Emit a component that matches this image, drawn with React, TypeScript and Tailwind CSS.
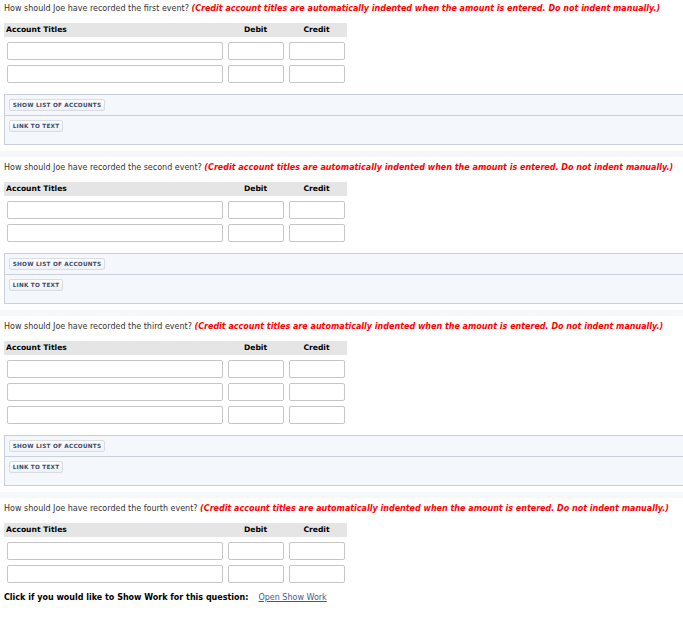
const ORDINALS = ['first', 'second', 'third', 'fourth'];
const ROWS = [2, 2, 3, 2];

function Question({ ordinal }: { ordinal: string }) {
  return (
    <p className="h-[13px] pl-[4px] text-[8px] leading-[13px] text-[#333] whitespace-nowrap">
      How should Joe have recorded the {ordinal} event?{' '}
      <span className="font-bold italic text-[#ff0000]">
        (Credit account titles are automatically indented when the amount is entered. Do not indent manually.)
      </span>
    </p>
  );
}

function EntryTable({ rows }: { rows: number }) {
  return (
    <div className="ml-[4px] mt-[8px] w-[343px]">
      <div className="flex h-[14px] items-center bg-[#e5e5e5] text-[7.6px] font-bold text-black">
        <div className="w-[221px] pl-[2px]">Account Titles</div>
        <div className="w-[61px] text-center">Debit</div>
        <div className="w-[61px] text-center">Credit</div>
      </div>
      <div className="mt-[5px] flex flex-col gap-[5px]">
        {Array.from({ length: rows }).map((_, i) => (
          <div key={i} className="flex">
            <input className="ml-[3px] h-[18px] w-[216px] rounded-[2px] border border-[#c6c6c6] bg-white" />
            <input className="ml-[5px] h-[18px] w-[56px] rounded-[2px] border border-[#c6c6c6] bg-white" />
            <input className="ml-[5px] h-[18px] w-[56px] rounded-[2px] border border-[#c6c6c6] bg-white" />
          </div>
        ))}
      </div>
    </div>
  );
}

function PanelButton({ label, width }: { label: string; width: string }) {
  return (
    <button
      className={`${width} flex h-[12px] items-center justify-center rounded-[2px] border border-[#d9dde3] bg-gradient-to-b from-white to-[#eef1f5] text-[5.7px] font-bold tracking-[0.25px] text-[#3a4c6e]`}
    >
      {label}
    </button>
  );
}

function Tools() {
  return (
    <div className="ml-[4px] mt-[11px] border border-[#c9d0dc] border-r-0 bg-[#f4f7fb]">
      <div className="border-b border-[#c9d0dc] px-[4px] pt-[4px] pb-[4px]">
        <PanelButton label="SHOW LIST OF ACCOUNTS" width="w-[96px]" />
      </div>
      <div className="h-[28px] px-[4px] pt-[4px]">
        <PanelButton label="LINK TO TEXT" width="w-[54px]" />
      </div>
    </div>
  );
}

export default function App() {
  return (
    <div className="min-h-[619px] bg-white pt-[2px]" style={{ fontFamily: '"DejaVu Sans", Verdana, sans-serif' }}>
      {ORDINALS.map((ord, i) => (
        <section key={ord}>
          {i > 0 && <div className="h-[4px]" />}
          <Question ordinal={ord} />
          <EntryTable rows={ROWS[i]} />
          {i < 3 ? (
            <>
              <Tools />
              <div className="mt-[6px] h-[6px] bg-[#f6f7f9]" />
            </>
          ) : (
            <p className="mt-[9px] pl-[4px] text-[8px] font-bold text-black">
              Click if you would like to Show Work for this question:
              <a href="#" className="ml-[10px] font-normal text-[#3d5d8f] underline">
                Open Show Work
              </a>
            </p>
          )}
        </section>
      ))}
    </div>
  );
}
